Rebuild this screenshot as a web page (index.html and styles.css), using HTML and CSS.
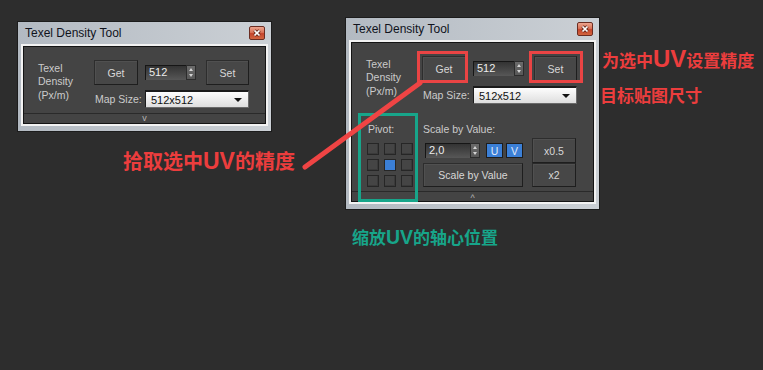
FILE: index.html
```html
<!DOCTYPE html>
<html>
<head>
<meta charset="utf-8">
<title>Texel Density Tool</title>
<link rel="stylesheet" href="styles.css">
</head>
<body>

<div class="win win1">
  <div class="titlebar">
    <span class="title">Texel Density Tool</span>
    <span class="close"><svg width="16" height="14" viewBox="0 0 16 14"><path d="M5.5 4.5 L10.5 9.5 M10.5 4.5 L5.5 9.5" stroke="#6a2a1c" stroke-width="3.4"/><path d="M5.5 4.5 L10.5 9.5 M10.5 4.5 L5.5 9.5" stroke="#ffffff" stroke-width="1.7"/></svg></span>
  </div>
  <div class="client">
    <div class="panel">
      <div class="density">
        <div class="dlabel">Texel<br>Density<br>(Px/m)</div>
        <div class="btn get">Get</div>
        <div class="spin spin-top"><div class="spin-field">512</div><div class="spin-arrows"><i class="up"></i><i class="down"></i></div></div>
        <div class="btn set">Set</div>
        <div class="maplabel">Map Size:</div>
        <div class="dropdown"><span>512x512</span><i class="caret"></i></div>
      </div>
      <div class="strip strip1">v</div>
    </div>
  </div>
</div>

<div class="win win2">
  <div class="titlebar">
    <span class="title">Texel Density Tool</span>
    <span class="close"><svg width="16" height="14" viewBox="0 0 16 14"><path d="M5.5 4.5 L10.5 9.5 M10.5 4.5 L5.5 9.5" stroke="#6a2a1c" stroke-width="3.4"/><path d="M5.5 4.5 L10.5 9.5 M10.5 4.5 L5.5 9.5" stroke="#ffffff" stroke-width="1.7"/></svg></span>
  </div>
  <div class="client">
    <div class="panel">
      <div class="density">
        <div class="dlabel">Texel<br>Density<br>(Px/m)</div>
        <div class="btn get">Get</div>
        <div class="spin spin-top"><div class="spin-field">512</div><div class="spin-arrows"><i class="up"></i><i class="down"></i></div></div>
        <div class="btn set">Set</div>
        <div class="maplabel">Map Size:</div>
        <div class="dropdown"><span>512x512</span><i class="caret"></i></div>
      </div>
      <div class="scale">
        <div class="pivot-label">Pivot:</div>
        <div class="pivot-grid">
          <i class="cell"></i><i class="cell"></i><i class="cell"></i>
          <i class="cell"></i><i class="cell on"></i><i class="cell"></i>
          <i class="cell"></i><i class="cell"></i><i class="cell"></i>
        </div>
        <div class="scale-label">Scale by Value:</div>
        <div class="scale-row">
          <div class="spin spin-val"><div class="spin-field">2,0</div><div class="spin-arrows"><i class="up"></i><i class="down"></i></div></div>
          <div class="uv uv-u">U</div>
          <div class="uv uv-v">V</div>
        </div>
        <div class="btn sbv">Scale by Value</div>
        <div class="btn half">x0.5</div>
        <div class="btn dbl">x2</div>
      </div>
      <div class="strip strip2">^</div>
    </div>
  </div>
</div>

<div class="mark red-get"></div>
<div class="mark red-set"></div>
<div class="mark green-pivot"></div>

<svg class="pointer" width="763" height="370" viewBox="0 0 763 370">
  <line x1="305" y1="167" x2="420" y2="83" stroke="#ef4444" stroke-width="5" stroke-linecap="round"/>
</svg>

<div class="note note-pick">拾取选中<b>UV</b>的精度</div>
<div class="note note-set">为选中<b>UV</b>设置精度</div>
<div class="note note-map">目标贴图尺寸</div>
<div class="note note-pivot">缩放<b>UV</b>的轴心位置</div>

</body>
</html>
```

FILE: styles.css
```css
* { box-sizing: border-box; }
html, body { margin: 0; padding: 0; }
body {
  background: #2d2d2d;
  width: 763px;
  height: 370px;
  position: relative;
  overflow: hidden;
  font-family: "Liberation Sans", Arial, sans-serif;
}

/* ---------- window chrome ---------- */
.win {
  position: absolute;
  width: 255px;
  border: 1px solid #1c1c1c;
  background: linear-gradient(to right, #b3bac2, #cbd0d5);
  padding: 0 3px 5px 3px;
}
.win1 { left: 17px; top: 21px; }
.win2 { left: 345px; top: 17px; }

.titlebar {
  height: 22px;
  display: flex;
  align-items: center;
  justify-content: space-between;
  padding: 0 3px 0 4px;
}
.title {
  font-size: 12px;
  color: #10131c;
}
.close {
  width: 16px;
  height: 14px;
  border: 1px solid #6b2d22;
  border-radius: 2px;
  background: linear-gradient(#eda48e 0%, #da7459 45%, #c5442c 55%, #d2653f 100%);
  display: flex;
  align-items: center;
  justify-content: center;
}
.close svg { display: block; margin: -1px; }

.client { border: 2px solid #f2f2f2; }
.panel {
  border: 1px solid #141414;
  background: #444444;
  color: #cbcbcb;
  font-size: 10.5px;
}

/* ---------- texel density block ---------- */
.density {
  display: grid;
  grid-template-columns: 56px 44px 7px 51px 10px 43px;
  grid-template-rows: 25px 18px;
  row-gap: 5px;
  padding: 13px 0 0 14px;
}
.dlabel {
  grid-column: 1;
  grid-row: 1 / 3;
  line-height: 13.3px;
  padding-top: 2px;
}
.get { grid-column: 2; grid-row: 1; }
.spin-top { grid-column: 4; grid-row: 1; align-self: center; }
.set { grid-column: 6; grid-row: 1; }
.maplabel {
  grid-column: 2 / 4;
  grid-row: 2;
  align-self: center;
  padding-left: 1px;
  white-space: nowrap;
}
.dropdown {
  grid-column: 4 / 7;
  grid-row: 2;
  display: flex;
  align-items: center;
  justify-content: space-between;
  background: linear-gradient(#fdfdfd, #dedede);
  border-top: 2px solid #1b1b1b;
  border-left: 1px solid #1b1b1b;
  border-right: 1px solid #6a6a6a;
  border-bottom: 1px solid #6a6a6a;
  padding: 0 6px 0 5px;
  color: #111;
  font-size: 11px;
}
.caret {
  width: 0;
  height: 0;
  border-left: 4px solid transparent;
  border-right: 4px solid transparent;
  border-top: 4px solid #111;
}

/* ---------- controls ---------- */
.btn {
  display: flex;
  align-items: center;
  justify-content: center;
  background: #474747;
  border: 1px solid #2d2d2d;
  border-right-color: #1e1e1e;
  border-bottom-color: #1e1e1e;
  box-shadow: inset 1px 1px 0 #505050;
  color: #d8d8d8;
}

.spin {
  display: flex;
  height: 15px;
}
.spin-field {
  flex: 1;
  background: linear-gradient(#333333, #575757);
  border-top: 1px solid #161616;
  border-left: 1px solid #161616;
  color: #ececec;
  padding-left: 3px;
  line-height: 13px;
  font-size: 11px;
}
.spin-arrows {
  width: 10px;
  background: linear-gradient(#6a6a6a, #585858);
  border: 1px solid #2c2c2c;
  display: flex;
  flex-direction: column;
  align-items: center;
  justify-content: space-evenly;
}
.up {
  width: 0; height: 0;
  border-left: 2.5px solid transparent;
  border-right: 2.5px solid transparent;
  border-bottom: 3px solid #d4d4d4;
}
.down {
  width: 0; height: 0;
  border-left: 2.5px solid transparent;
  border-right: 2.5px solid transparent;
  border-top: 3px solid #d4d4d4;
}

/* ---------- scale block ---------- */
.scale {
  display: grid;
  grid-template-columns: 56px 100px 9px 44px;
  grid-template-rows: 14px 2px 25px 24px;
  padding: 18px 0 0 15px;
  margin-bottom: 4px;
}
.pivot-label {
  grid-column: 1;
  grid-row: 1;
  line-height: 14px;
  padding-left: 1px;
}
.pivot-grid {
  grid-column: 1;
  grid-row: 3 / 5;
  margin-top: 5px;
  display: grid;
  grid-template-columns: repeat(3, 12px);
  grid-auto-rows: 12px;
  column-gap: 5px;
  row-gap: 4px;
}
.cell {
  display: block;
  background: #454545;
  border: 1px solid #262626;
  box-shadow: inset -1px -1px 0 #3a3a3a;
}
.cell.on {
  background: #3b7fd6;
  box-shadow: none;
}
.scale-label {
  grid-column: 2 / 5;
  grid-row: 1;
  line-height: 14px;
}
.scale-row {
  grid-column: 2;
  grid-row: 3;
  display: flex;
  align-items: center;
  padding-left: 2px;
}
.spin-val { width: 55px; }
.uv {
  height: 15px;
  background: #3b7fd6;
  border: 1px solid #1d1d1d;
  color: #e2ecfb;
  display: flex;
  align-items: center;
  justify-content: center;
}
.uv-u { width: 17px; margin-left: 6px; }
.uv-v { width: 17px; margin-left: 3px; }
.sbv { grid-column: 2; grid-row: 4; }
.half { grid-column: 4; grid-row: 3; }
.dbl { grid-column: 4; grid-row: 4; border-top-color: #2a2a2a; }

/* ---------- collapse strip ---------- */
.strip {
  border-top: 1px solid #2a2a2a;
  height: 10px;
  text-align: center;
  font-size: 9px;
  color: #b4b4b4;
}
.strip1 { margin-top: 5px; line-height: 8px; }
.strip2 { line-height: 12px; }

/* ---------- annotations ---------- */
.mark { position: absolute; border: 3px solid #ea4444; }
.red-get { left: 417px; top: 51px; width: 51px; height: 32px; }
.red-set { left: 529px; top: 51px; width: 54px; height: 32px; }
.green-pivot { left: 358px; top: 113px; width: 60px; height: 89px; border-color: #17a58a; }

.pointer { position: absolute; left: 0; top: 0; }

.note {
  position: absolute;
  white-space: nowrap;
  font-family: "Noto Sans CJK SC", "Liberation Sans", sans-serif;
  font-weight: 700;
  color: #ec3d3d;
}
.note b {
  font-family: "Liberation Sans", Arial, sans-serif;
  font-weight: 700;
}
.note-pick { left: 123px; top: 148px; font-size: 20px; line-height: 26px; }
.note-pick b { font-size: 23px; }
.note-set { left: 602px; top: 47px; font-size: 17px; line-height: 24px; }
.note-set b { font-size: 24px; }
.note-map { left: 600px; top: 84px; font-size: 17px; line-height: 22px; }
.note-pivot { left: 352px; top: 226px; font-size: 17px; line-height: 22px; color: #17a58a; }
.note-pivot b { font-size: 19.5px; }
```
